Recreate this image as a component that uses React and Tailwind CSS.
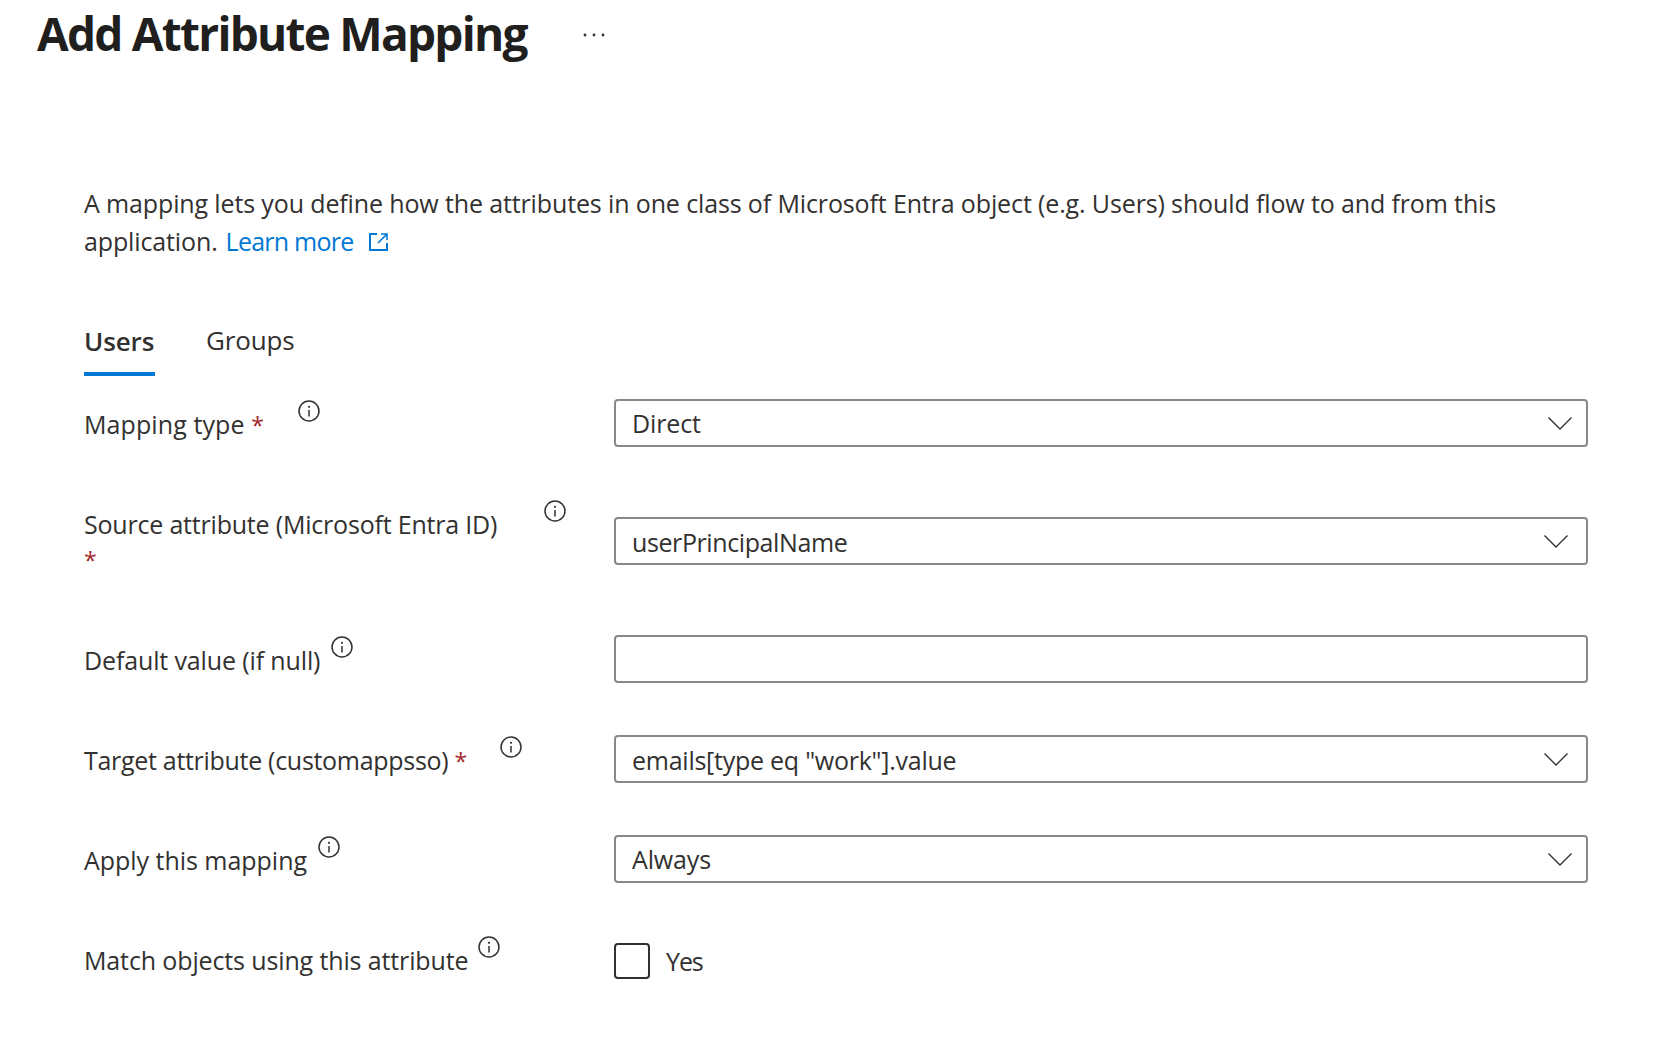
import React from "react";

const font = { fontFamily: '"Open Sans", "Noto Sans", sans-serif' };

function InfoIcon({ className = "" }) {
  return (
    <svg viewBox="0 0 22 22" className={`w-[22px] h-[22px] shrink-0 ${className}`} fill="none">
      <circle cx="11" cy="11" r="10" stroke="#323130" strokeWidth="1.5" />
      <circle cx="11" cy="6.8" r="1.1" fill="#323130" />
      <path d="M11 10v6.5" stroke="#323130" strokeWidth="1.5" />
    </svg>
  );
}

function Chevron({ className = "" }) {
  return (
    <svg viewBox="0 0 24 13" className={`w-6 h-[13px] shrink-0 ${className}`} fill="none">
      <path d="M0.5 0.5L12 12L23.5 0.5" stroke="#323130" strokeWidth="1.4" />
    </svg>
  );
}

function Star() {
  return <span className="text-[#a4262c] text-[23px]">*</span>;
}

function SelectBox({ value, right = "pr-[14px]", text = "" }) {
  return (
    <div className={`flex-1 h-12 flex items-center justify-between bg-white border-2 border-[#8a8886] rounded-[4px] pl-4 ${right}`}>
      <span className={text}>{value}</span>
      <Chevron />
    </div>
  );
}

function Row({ label, info, children, className = "" }) {
  return (
    <div className={`flex items-start ${className}`}>
      <div className="w-[530px] shrink-0 flex items-start">{label}{info}</div>
      {children}
    </div>
  );
}

export default function App() {
  return (
    <div className="w-[1666px] h-[1040px] bg-white text-[#323130] overflow-hidden text-[25px] leading-[37px] tracking-[-0.13px]" style={font}>
      <div className="flex items-center pl-[37px] pt-[6px] h-[64px]">
        <h1 className="text-[46px] leading-[60px] font-bold tracking-[-1.76px] text-[#201f1e] mt-[-4px]">Add Attribute Mapping</h1>
        <svg viewBox="0 0 22 4" className="w-[22px] h-1 ml-[56px]" fill="#323130">
          <circle cx="2" cy="2" r="1.4" />
          <circle cx="11" cy="2" r="1.4" />
          <circle cx="20" cy="2" r="1.4" />
        </svg>
      </div>

      <div className="pl-[84px] w-[1588px]">
        <p className="mt-[121px]">
          A mapping lets you define how the attributes in one class of Microsoft Entra object (e.g. Users) should flow to and from this
        </p>
        <div className="flex items-center mt-px">
          <span>application.</span>
          <a className="text-[#0078d4] ml-2 tracking-[-0.75px]">Learn more</a>
          <svg viewBox="0 0 19 18" className="w-[19px] h-[18px] ml-[15px]" fill="none" stroke="#0078d4" strokeWidth="2">
            <path d="M8 1H1v16h17v-7" />
            <path d="M9 10l9-9M12 1h6v6" strokeWidth="1.6" />
          </svg>
        </div>

        <div className="flex mt-[54px] text-[26px]">
          <div className="w-[71px] h-[62px] border-b-4 border-[#0078d4] font-semibold pt-[9px]">Users</div>
          <div className="ml-[51px] pt-[8px]">Groups</div>
        </div>

        <div className="mt-[23px]">
          <Row
            className="h-[118px]"
            label={<span className="mt-[7px] tracking-[0.1px]">Mapping type <Star /></span>}
            info={<InfoIcon className="ml-[34px] mt-[1px]" />}
          >
            <SelectBox value="Direct" />
          </Row>
          <Row
            className="h-[118px]"
            label={<span className="mt-[-10px] w-[430px] leading-[35px] tracking-[-0.2px]">Source attribute (Microsoft Entra ID) <Star /></span>}
            info={<InfoIcon className="ml-[30px] mt-[-17px]" />}
          >
            <SelectBox value="userPrincipalName" right="pr-[18px]" text="tracking-[-0.4px] mt-[2px]" />
          </Row>
          <Row
            className="h-[100px]"
            label={<span className="mt-[7px]">Default value (if null)</span>}
            info={<InfoIcon className="ml-[11px] mt-[1px]" />}
          >
            <input className="flex-1 h-12 bg-white border-2 border-[#8a8886] rounded-[4px] outline-none" readOnly />
          </Row>
          <Row
            className="h-[100px]"
            label={<span className="mt-[7px] tracking-[-0.3px]">Target attribute (customappsso) <Star /></span>}
            info={<InfoIcon className="ml-[33px] mt-[1px]" />}
          >
            <SelectBox value={'emails[type eq "work"].value'} right="pr-[18px]" text="tracking-[-0.25px] mt-[2px]" />
          </Row>
          <Row
            className="h-[100px]"
            label={<span className="mt-[7px] tracking-[-0.03px]">Apply this mapping</span>}
            info={<InfoIcon className="ml-[11px] mt-[1px]" />}
          >
            <SelectBox value="Always" />
          </Row>
          <Row
            label={<span className="mt-[7px]">Match objects using this attribute</span>}
            info={<InfoIcon className="ml-[10px] mt-[1px]" />}
          >
            <div className="flex items-center mt-[6px]">
              <div className="w-9 h-9 border-2 border-[#323130] rounded-[4px] bg-white" />
              <span className="ml-4 mt-[2px] tracking-[-1.1px]">Yes</span>
            </div>
          </Row>
        </div>
      </div>
    </div>
  );
}
